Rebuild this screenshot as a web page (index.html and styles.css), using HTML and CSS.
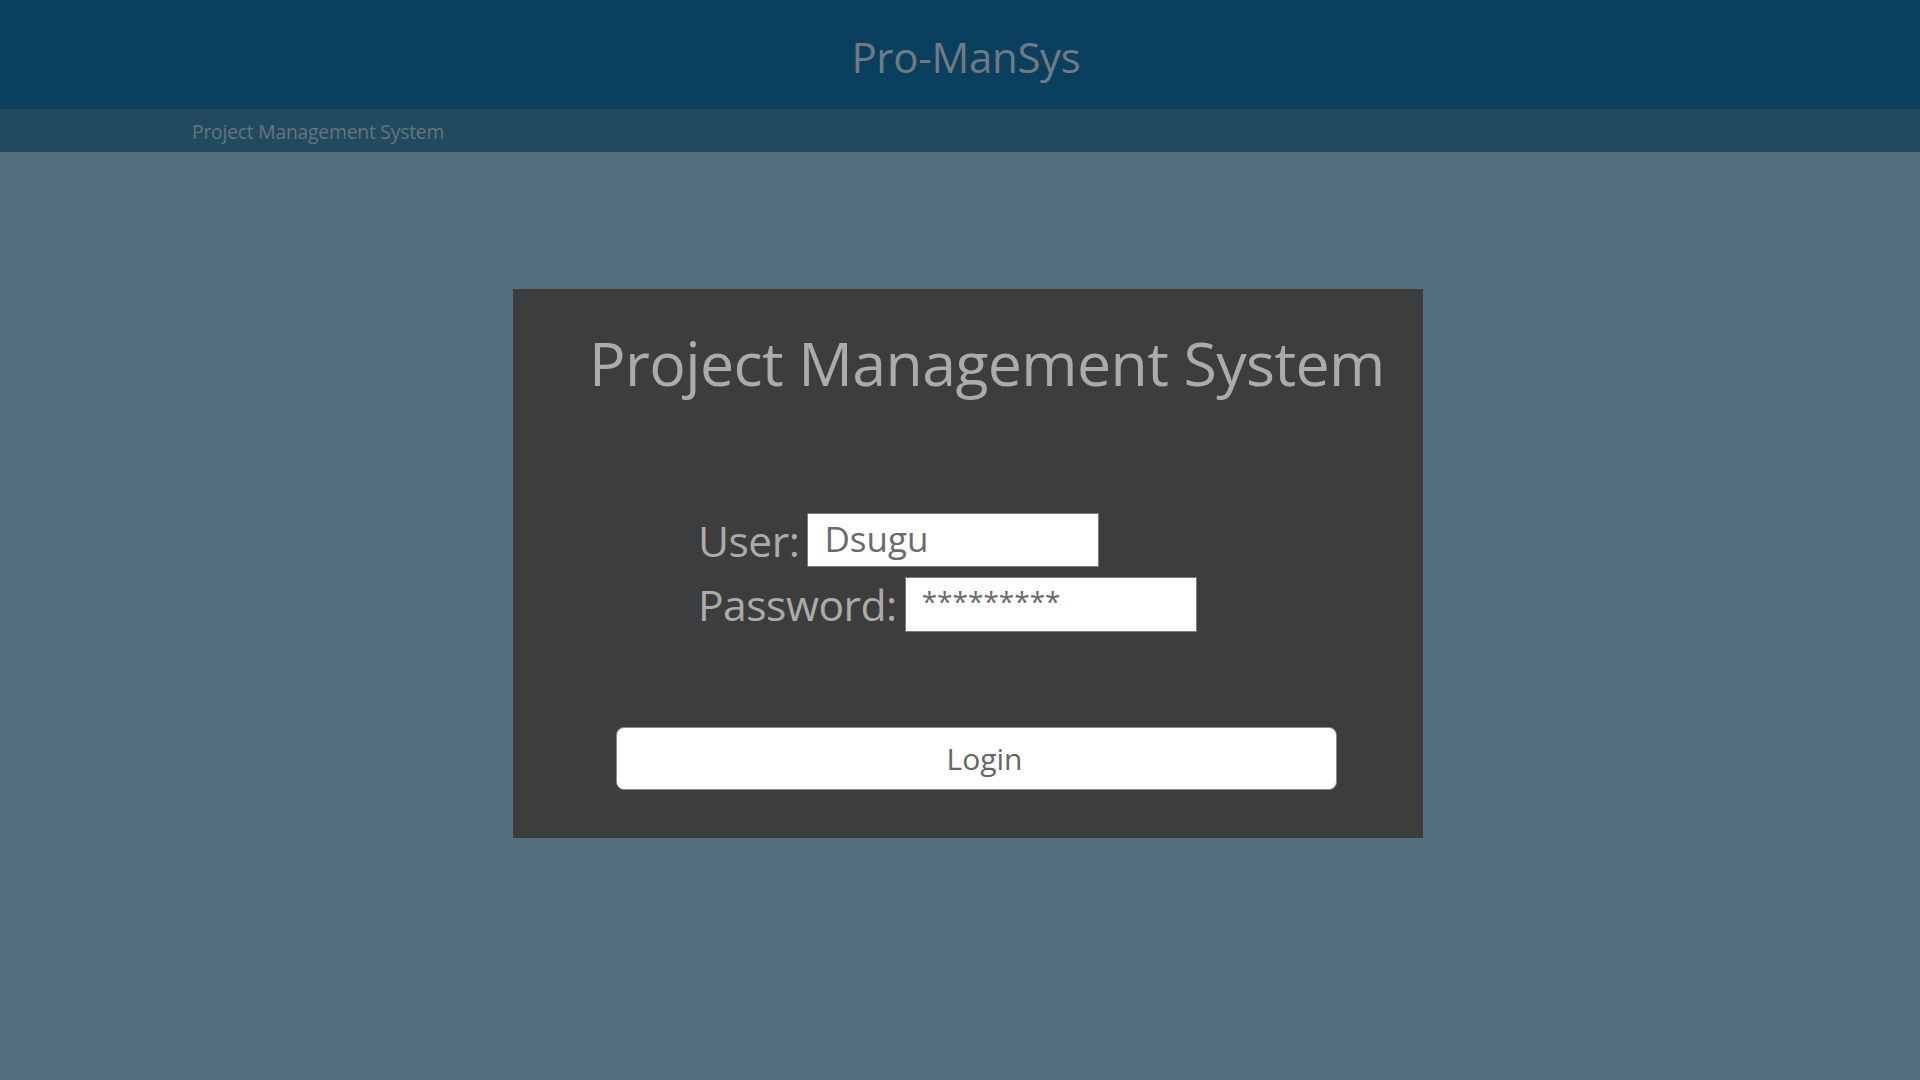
FILE: index.html
```html
<!DOCTYPE html>
<html>
<head>
<meta charset="utf-8">
<link rel="stylesheet" href="styles.css">
</head>
<body>
<header class="topbar">
  <h1 class="brand">Pro-ManSys</h1>
</header>
<nav class="subbar">
  <span class="subtitle">Project Management System</span>
</nav>
<main class="main">
  <section class="card">
    <h2 class="card-title">Project Management System</h2>
    <div class="form">
      <div class="row">
        <label class="label">User:</label>
        <div class="input">Dsugu</div>
      </div>
      <div class="row">
        <label class="label">Password:</label>
        <div class="input pw">*********</div>
      </div>
    </div>
    <button class="login">Login</button>
  </section>
</main>
</body>
</html>
```
FILE: styles.css
```css
* { box-sizing: border-box; }
html, body { margin: 0; padding: 0; }
body {
  width: 1920px;
  height: 1080px;
  background: #546e80;
  font-family: "Open Sans", "Noto Sans", sans-serif;
  overflow: hidden;
}
.topbar {
  height: 109px;
  background: #0a3f5e;
  display: flex;
  justify-content: center;
  padding-left: 12px;
}
.brand {
  margin: 0;
  font-weight: 400;
  font-size: 42px;
  line-height: 42px;
  padding-top: 36px;
  color: #6f7b84;
  letter-spacing: -0.3px;
}
.subbar {
  height: 43px;
  background: #214a5e;
  padding-left: 192px;
  display: flex;
  align-items: center;
}
.subtitle {
  font-size: 19.3px;
  color: #66757f;
  padding-top: 2px;
  letter-spacing: -0.2px;
}
.main {
  padding: 137px 0 0 513px;
}
.card {
  width: 910px;
  height: 549px;
  background: #3d3d3d;
  padding: 34px 0 0 0;
  display: flex;
  flex-direction: column;
}
.card-title {
  margin: 0 0 0 76px;
  font-weight: 400;
  font-size: 60.8px;
  line-height: 80px;
  color: #ababab;
  letter-spacing: -0.6px;
}
.form {
  margin: 110px 0 0 185px;
  display: flex;
  flex-direction: column;
  gap: 10px;
}
.row {
  display: flex;
  align-items: center;
  gap: 8px;
  height: 54px;
}
.label {
  font-size: 42.6px;
  color: #ababab;
  line-height: 54px;
  letter-spacing: -0.5px;
}
.input {
  width: 292px;
  height: 54px;
  background: #ffffff;
  border: 1px solid #7a7a7a;
  color: #6b6b6b;
  font-size: 35px;
  line-height: 50px;
  padding-left: 16px;
}
.pw {
  width: 292px;
  height: 55px;
  font-size: 28px;
  line-height: 46px;
  letter-spacing: 0;
}
.login {
  margin: 96px 0 0 103px;
  width: 721px;
  height: 63px;
  background: #ffffff;
  border: 1px solid #8a8a8a;
  border-radius: 8px;
  font-family: "Open Sans", "Noto Sans", sans-serif;
  font-size: 30px;
  color: #666666;
  padding: 0 0 0 16px;
  line-height: 60px;
}
```
